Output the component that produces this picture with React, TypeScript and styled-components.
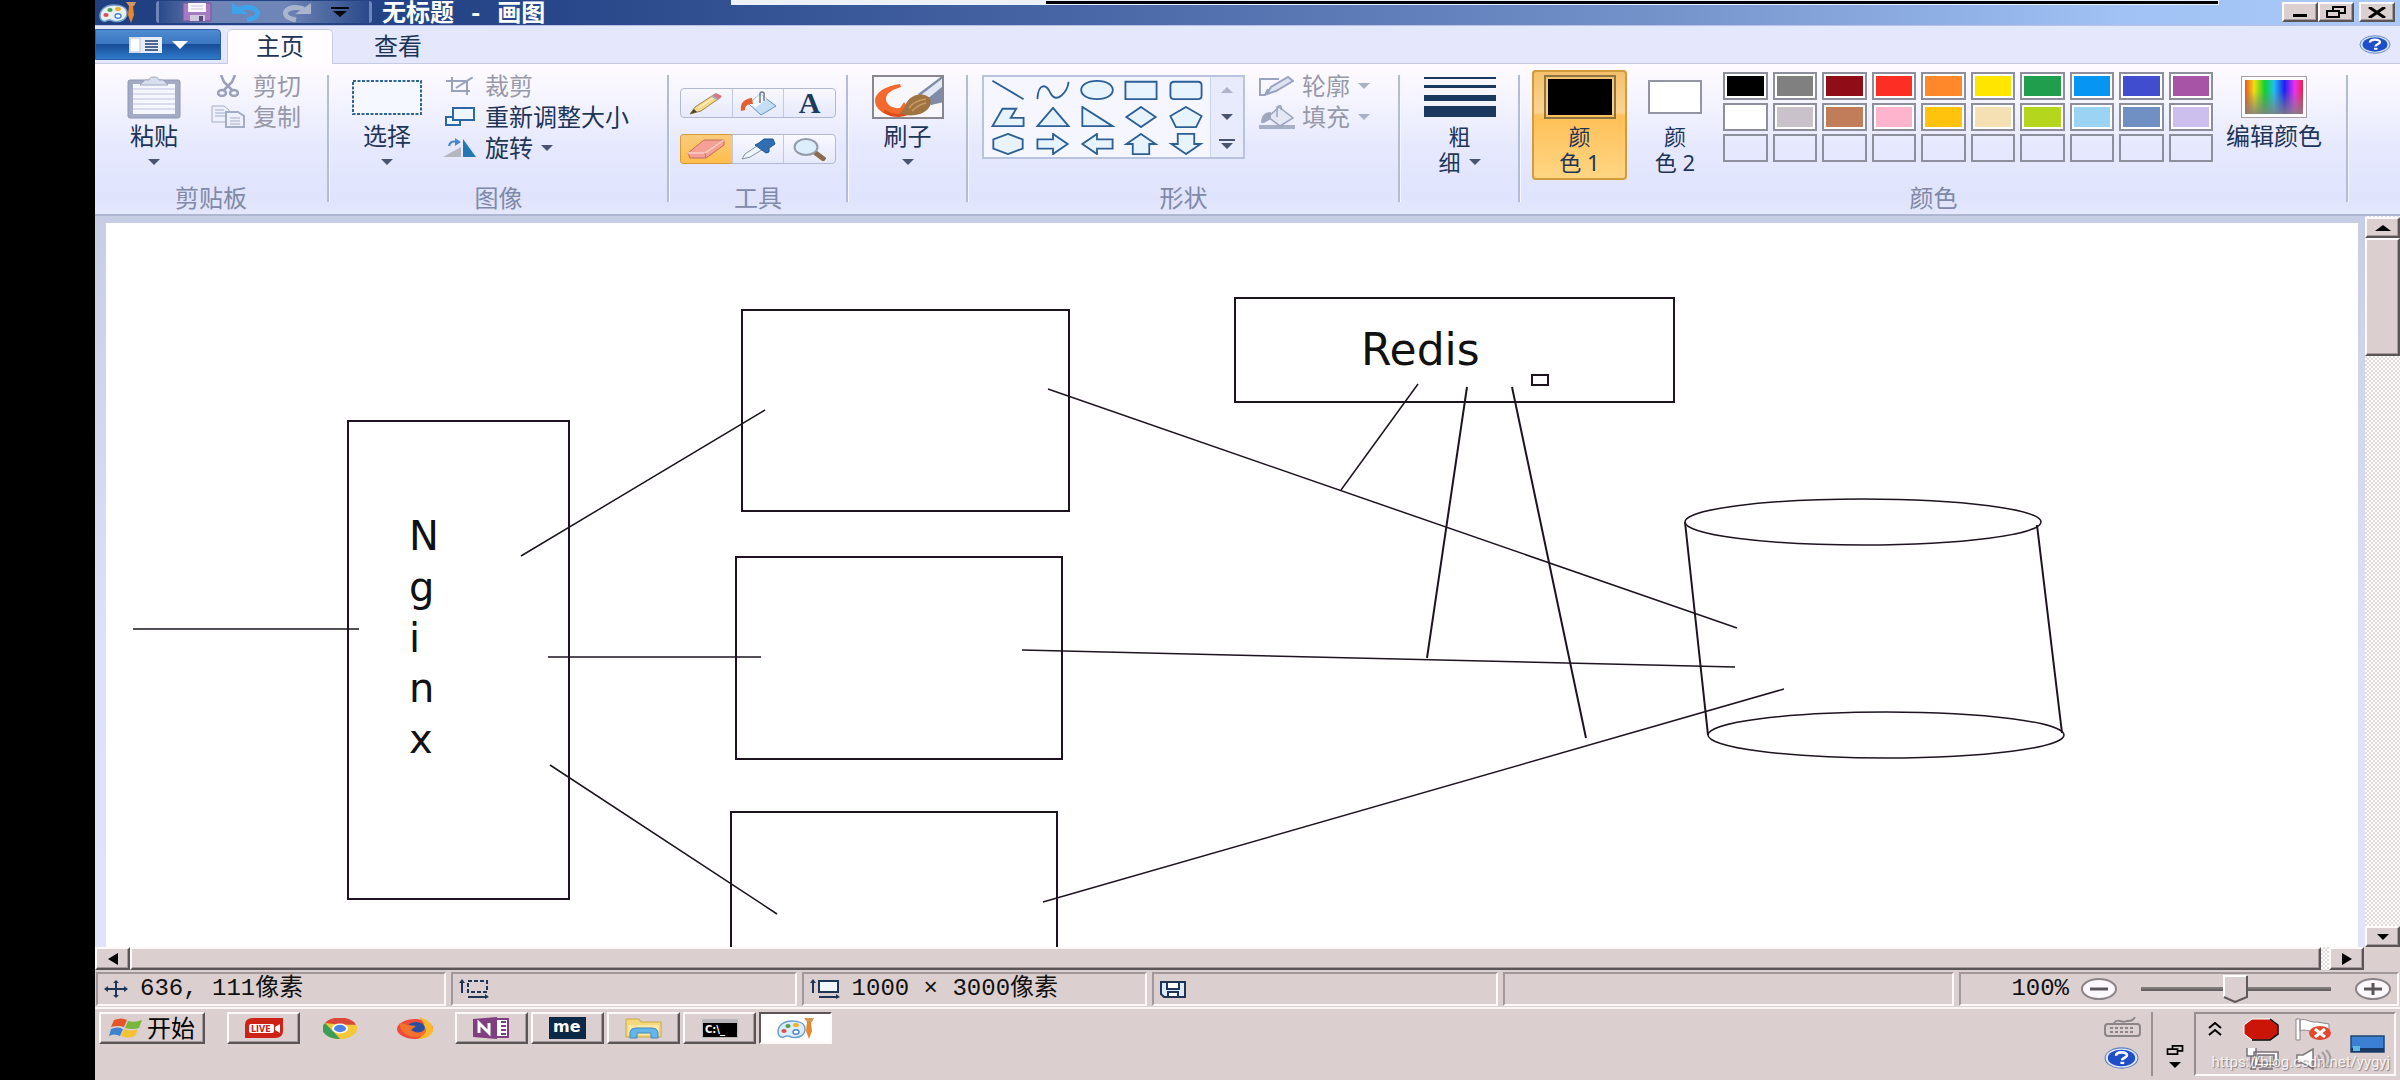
import React from "react";
import styled, { createGlobalStyle, css } from "styled-components";

const face = "#dccfcf";
const ink = "#1e3558";

const Global = createGlobalStyle`
  *, *::before, *::after { box-sizing: border-box; }
  html, body { margin: 0; background: #000; }
  body { font-family: "Noto Sans", "Noto Sans CJK SC", sans-serif; font-size: 24px; line-height: 24px; color: ${ink}; }
  button { border: 0; background: none; padding: 0; margin: 0; font: inherit; color: inherit; }
  svg { display: block; flex: none; }
`;

const raised = css`
  background: ${face};
  border: 2px solid;
  border-color: #fffafa #5c5557 #5c5557 #fffafa;
  box-shadow: inset -1px -1px 0 #a59b9c;
`;

const Screen = styled.main`
  height: 100vh;
  padding-left: 95px;
  background: #000;
  overflow: hidden;
`;
const Window = styled.div`
  height: 100%;
  display: flex;
  flex-direction: column;
  background: ${face};
`;

/* Title bar */
const TitleBar = styled.header`
  position: relative;
  flex: none;
  height: 26px;
  display: flex;
  align-items: center;
  padding: 0 5px 1px 4px;
  background: linear-gradient(90deg, #203f80 0%, #27478a 20%, #4765a4 42%, #7493cb 68%, #a0c2f4 88%, #a9caf9 100%);
  border-bottom: 1px solid #b9c2e4;
`;
const QuickBar = styled.div`
  display: flex;
  align-items: center;
  gap: 19px;
  margin-left: 20px;
  padding: 0 20px 0 23px;
  height: 22px;
  border: solid #6f86b8;
  border-width: 0 3px;
  border-radius: 3px;
  background: linear-gradient(90deg, #2b4a8a, #6f85b8 25%, #6f85b8 60%, #2b4a8a);
`;
const Title = styled.h1`
  flex: 1;
  margin: 0 0 0 10px;
  padding-top: 6px;
  font: bold 24px/24px "Liberation Mono", "Noto Sans CJK SC", monospace;
  color: #fff;
  white-space: pre;
`;
const ShareBar = styled.div`
  position: absolute;
  top: 0;
  left: 636px;
  right: 181px;
  height: 5px;
  padding: 1px 1px 1px 315px;
  background: #edf0fd;
`;
const ShareLine = styled.div`
  height: 3px;
  background: #000;
`;
const CaptionButton = styled.button<{ $gap?: boolean }>`
  ${raised}
  width: 36px;
  height: 20px;
  margin-left: ${(p) => (p.$gap ? 5 : 0)}px;
  display: grid;
  place-items: center;
`;

/* Tabs */
const TabStrip = styled.nav`
  flex: none;
  height: 38px;
  display: flex;
  align-items: flex-end;
  padding: 3px 9px 0 0;
  background: #e5e8fc;
  border-bottom: 1px solid #c5cbe2;
`;
const FileButton = styled.button`
  align-self: flex-start;
  width: 126px;
  height: 31px;
  display: flex;
  align-items: center;
  justify-content: center;
  gap: 10px;
  border: 1px solid #2d5ca6;
  border-radius: 0 4px 0 0;
  background: linear-gradient(#4f8bd0, #3a76c2 48%, #174c98 50%, #2f7bca);
`;
const Tab = styled.button<{ $active?: boolean }>`
  width: 106px;
  height: 35px;
  padding-bottom: 2px;
  margin-left: ${(p) => (p.$active ? 6 : 12)}px;
  margin-bottom: -1px;
  border-radius: 5px 5px 0 0;
  ${(p) => p.$active && "background: #fffdff; border: 1px solid #c5cbe2; border-bottom: 0;"}
`;
const HelpButton = styled.button`
  margin: 0 0 9px auto;
`;

/* Ribbon */
const Ribbon = styled.section`
  flex: none;
  display: flex;
  background: linear-gradient(#fffbff, #f4f4ff 25%, #e6e9fe 55%, #dfe3fc 90%, #e4e8fd);
  border-bottom: 2px solid #aeb6d0;
`;
const Group = styled.div<{ $w: number }>`
  flex: none;
  width: ${(p) => p.$w}px;
  display: flex;
  flex-direction: column;
`;
const GroupBody = styled.div<{ $pad?: number; $gap?: number; $center?: boolean }>`
  height: 122px;
  padding: 6px 0 6px ${(p) => p.$pad ?? 0}px;
  display: flex;
  align-items: flex-start;
  gap: ${(p) => p.$gap ?? 0}px;
  ${(p) => p.$center && "justify-content: center;"}
`;
const GroupLabel = styled.div`
  height: 28px;
  text-align: center;
  color: #8089a8;
`;
const Divider = styled.div`
  flex: none;
  width: 3px;
  margin: 11px 0 12px;
  background: #b4bbd4;
  border-right: 1px solid #f6f7ff;
`;
const Large = styled.button<{ $w: number; $on?: boolean }>`
  width: ${(p) => p.$w}px;
  height: 110px;
  padding-top: 5px;
  display: flex;
  flex-direction: column;
  align-items: center;
  border-radius: 4px;
  white-space: nowrap;
  ${(p) =>
    p.$on &&
    "background: linear-gradient(#f5bf6a, #fbd491 38%, #ffc057 42%, #ffd685); box-shadow: inset 0 0 0 2px #d19c3c;"}
`;
const IconBox = styled.span`
  height: 44px;
  margin-bottom: 4px;
  display: grid;
  place-items: center;
`;
const Line = styled.span<{ $stacked?: boolean }>`
  height: 26px;
  font-size: ${(p) => (p.$stacked ? 22 : 24)}px;
  line-height: 26px;
  display: flex;
  align-items: center;
  gap: 8px;
`;
const Rows = styled.div`
  display: flex;
  flex-direction: column;
`;
const Row = styled.button<{ $off?: boolean }>`
  height: 31px;
  display: flex;
  align-items: center;
  gap: 8px;
  white-space: nowrap;
  color: ${(p) => (p.$off ? "#9899a8" : ink)};
`;
const RowIcon = styled.span`
  width: 35px;
  display: grid;
  place-items: center;
`;

const ToolBars = styled.div`
  display: flex;
  flex-direction: column;
  gap: 16px;
  padding-top: 18px;
`;
const ToolBar = styled.div`
  width: 156px;
  height: 30px;
  display: flex;
  border: 1px solid #b3b9d3;
  border-radius: 4px;
  background: linear-gradient(#f8f8ff, #e6e9fb);
`;
const Tool = styled.button<{ $on?: boolean }>`
  flex: 1;
  display: grid;
  place-items: center;
  & + & { border-left: 1px solid #c2c8de; }
  ${(p) =>
    p.$on &&
    "background: linear-gradient(#f9cb7c, #ffbd4c); box-shadow: 0 0 0 1px #d59a34; border-radius: 3px;"}
`;

const Gallery = styled.div`
  width: 263px;
  height: 84px;
  margin-top: 5px;
  display: flex;
  border: 2px solid #b9c3e0;
  background: #f5f6ff;
`;
const ShapeGrid = styled.div`
  flex: 1;
  display: grid;
  grid-template-columns: repeat(5, 1fr);
  padding: 0 2px;
`;
const GalleryButton = styled.button`
  display: grid;
  place-items: center;
`;
const GalleryScroll = styled.div`
  width: 33px;
  display: grid;
  grid-template-rows: repeat(3, 1fr);
  background: #e8ebfc;
  border-left: 1px solid #cdd3ea;
`;

const CurrentColor = styled.span<{ $c: string; $big?: boolean }>`
  width: ${(p) => (p.$big ? 72 : 54)}px;
  height: ${(p) => (p.$big ? 44 : 34)}px;
  border: 2px solid ${(p) => (p.$big ? "#8d7443" : "#9395a5")};
  padding: 2px;
  background: ${(p) => p.$c};
`;
const ColorFill = styled.span<{ $c: string }>`
  display: block;
  height: 100%;
  background: ${(p) => p.$c};
`;
const Palette = styled.div`
  width: 490px;
  margin-top: 2px;
  display: grid;
  grid-template-columns: repeat(10, 1fr);
  grid-auto-rows: 28px;
  gap: 3px 5px;
`;
const Swatch = styled.button<{ $c?: string }>`
  border: 2px solid #8e8f9d;
  ${(p) => p.$c && `background: ${p.$c}; box-shadow: inset 0 0 0 2px #fff;`}
`;

/* Work area */
const WorkArea = styled.section`
  flex: 1;
  min-height: 0;
  display: flex;
  background: linear-gradient(#c8cde6, #dfe1f8 60%, #e2e3fb);
`;
const Canvas = styled.div`
  flex: 1;
  min-width: 0;
  margin: 7px 7px 0 11px;
  background: #fff;
  overflow: hidden;
`;
const hatch = css`
  background: repeating-conic-gradient(#fff 0 25%, #e3d9da 0 50%) 0 0 / 4px 4px;
`;
const VScroll = styled.div`
  flex: none;
  width: 35px;
  display: flex;
  flex-direction: column;
  padding-top: 1px;
  ${hatch}
`;
const VThumb = styled.div`
  ${raised}
  height: 118px;
  margin-bottom: auto;
`;
const VButton = styled.button`
  ${raised}
  height: 21px;
  display: grid;
  place-items: center;
`;
const HScroll = styled.div`
  flex: none;
  display: flex;
  height: 23px;
  margin-right: 36px;
  ${hatch}
`;
const HThumb = styled.div`
  ${raised}
  flex: 1;
  margin-right: 8px;
`;
const HButton = styled.button`
  ${raised}
  width: 35px;
  display: grid;
  place-items: center;
`;

/* Status bar */
const StatusBar = styled.footer`
  flex: none;
  height: 39px;
  display: grid;
  grid-template-columns: 350fr 345fr 345fr 346fr 450fr 440fr;
  gap: 5px;
  padding: 2px 1px;
  border-bottom: 2px solid #fbf5f5;
  font: 24px/24px "Liberation Mono", "Noto Sans CJK SC", monospace;
  color: #111;
`;
const Cell = styled.div<{ $end?: boolean }>`
  min-width: 0;
  display: flex;
  align-items: center;
  ${(p) => p.$end && "justify-content: flex-end;"}
  gap: 12px;
  padding: 0 6px;
  border: 2px solid;
  border-color: #a0989a #fff9f9 #fff9f9 #a0989a;
  white-space: pre;
`;
const thumbArt = encodeURIComponent(
  `<svg xmlns="http://www.w3.org/2000/svg" width="25" height="28"><path d="M1 1h23v21l-12 5-11-5z" fill="${face}"/><path d="M1 22V1h22" fill="none" stroke="#fff" stroke-width="2"/><path d="M24 1v21l-12 5-11-5" fill="none" stroke="#5f595b" stroke-width="2"/></svg>`
);
const Zoom = styled.input`
  appearance: none;
  width: 190px;
  height: 30px;
  margin: 0 12px;
  background: linear-gradient(#8a8384, #5f595b) center / 100% 4px no-repeat;
  &::-webkit-slider-thumb {
    appearance: none;
    width: 25px;
    height: 28px;
    background: url("data:image/svg+xml,${thumbArt}") center / 100% 100% no-repeat;
  }
`;

/* Task bar */
const TaskBar = styled.footer`
  position: relative;
  flex: none;
  height: 71px;
  display: flex;
  align-items: flex-start;
  padding: 3px 4px 0;
  color: #000;
`;
const Start = styled.button`
  ${raised}
  width: 106px;
  height: 32px;
  margin-right: 22px;
  display: flex;
  align-items: center;
  justify-content: center;
  gap: 4px;
`;
const Tasks = styled.div`
  display: flex;
  gap: 3px;
  margin-right: auto;
`;
const Task = styled.button<{ $kind?: "flat" | "down" }>`
  ${raised}
  width: 73px;
  height: 32px;
  display: grid;
  place-items: center;
  ${(p) => p.$kind === "flat" && "border-color: transparent; box-shadow: none;"}
  ${(p) =>
    p.$kind === "down" &&
    "background: #fff; border-color: #5c5557 #fffafa #fffafa #5c5557; box-shadow: none;"}
`;
const Language = styled.div`
  height: 64px;
  display: flex;
  flex-direction: column;
  gap: 10px;
  padding: 5px 10px 0 0;
  border-right: 2px solid #9b9294;
`;
const Restore = styled.button`
  height: 64px;
  padding: 33px 9px 0 12px;
  display: flex;
  flex-direction: column;
  align-items: center;
  gap: 7px;
`;
const Tray = styled.div`
  width: 202px;
  height: 64px;
  display: grid;
  grid-template-columns: 38px 53px 53px 54px;
  grid-template-rows: 30px 30px;
  place-items: center;
  border: 2px solid;
  border-color: #968e90 #fffafa #fffafa #968e90;
`;
const TrayButton = styled.button<{ $tall?: boolean; $col?: number }>`
  ${(p) => p.$tall && "grid-row: 1 / 3; grid-column: 4;"}
  ${(p) => p.$col && `grid-column: ${p.$col};`}
`;
const Watermark = styled.span`
  position: absolute;
  right: 10px;
  bottom: 8px;
  font: 15px/20px Roboto, sans-serif;
  color: rgba(255, 255, 255, 0.85);
  text-shadow: 1px 1px 1px rgba(90, 80, 85, 0.6);
`;

/* Icons */
const Down = ({ c = "#4a5472", w = 12, h = 6 }: { c?: string; w?: number; h?: number }) => (
  <svg width={w} height={h} viewBox="0 0 12 6"><path d="M0 0h12L6 6z" fill={c} /></svg>
);
const Up = ({ c = "#b0b3c8", w = 12, h = 6 }: { c?: string; w?: number; h?: number }) => (
  <svg width={w} height={h} viewBox="0 0 12 6" preserveAspectRatio="none"><path d="M0 6h12L6 0z" fill={c} /></svg>
);
const PaintIcon = ({ light }: { light?: boolean }) => (
  <svg width="37" height="22" viewBox="0 0 37 22">
    <path d="M15 4C6 4 1 9 1 15c0 4 3 6 6 5 3-2 5-1 7 0 8 2 14-2 14-8 0-5-5-8-13-8z" fill={light ? "#dcecf8" : "#e8f0f6"} stroke="#6f9fca" strokeWidth="1.5" />
    <ellipse cx="7" cy="14" rx="2.6" ry="2" fill="#d95050" /><ellipse cx="11" cy="9" rx="2.6" ry="2" fill="#4aa050" />
    <ellipse cx="19" cy="8" rx="3" ry="2" fill="#f0b030" /><ellipse cx="19" cy="15" rx="3" ry="2.2" fill="#fff" stroke="#4b85c5" strokeWidth="1.4" />
    <path d="M27 1h10l-2 4h-5z" fill="#d5965c" /><path d="M30 5h4l1 9-3 8-3-8z" fill="#e8862c" />
  </svg>
);
const SaveIcon = () => (
  <svg width="30" height="20" viewBox="0 0 30 20">
    <path d="M1 1h28v18H1z" fill="#a779c0" stroke="#7a529b" /><path d="M6 1h18v9H6z" fill="#f8f6ff" />
    <path d="M9 4h12M9 7h12" stroke="#c9c3dc" /><path d="M8 13h15v6H8z" fill="#cfc9dd" /><path d="M17 14h4v5h-4z" fill="#594878" />
  </svg>
);
const UndoIcon = ({ redo }: { redo?: boolean }) => (
  <svg width="31" height="20" viewBox="0 0 31 20">
    <g transform={redo ? "translate(31 0) scale(-1 1)" : undefined}>
      <path d="M8 7c12-4 21 1 18 6-1 3-5 4-10 5" fill="none" stroke={redo ? "#aab4cd" : "#3fa3ec"} strokeWidth="5" />
      <path d="M1 1v11h16z" fill={redo ? "#aab4cd" : "#3fa3ec"} />
    </g>
  </svg>
);
const FileIcon = () => (
  <svg width="33" height="16" viewBox="0 0 33 16">
    <path d="M0 0h33v16H0z" fill="#e7edf8" /><path d="M1 1h10v14H1z" fill="#fff" stroke="#b9c3da" />
    <path d="M16 4h13M16 7h13M16 10h13M16 13h13" stroke="#1d3a72" strokeWidth="1.6" />
  </svg>
);
const Help = ({ w = 32, h = 19 }: { w?: number; h?: number }) => (
  <svg width={w} height={h} viewBox="0 0 32 20" preserveAspectRatio="none">
    <ellipse cx="16" cy="10" rx="15" ry="9.2" fill="#dfe8fb" stroke="#5f83c4" /><ellipse cx="16" cy="10" rx="12.5" ry="7.6" fill="#1e4fc8" />
    <path d="M11 8c0-4 10-4 10-.6C21 10 16.500 9.500 16.500 12" fill="none" stroke="#fff" strokeWidth="2.400" /><path d="M15 13.500h3.500v2H15z" fill="#fff" />
  </svg>
);
const PasteIcon = () => (
  <svg width="56" height="43" viewBox="0 0 56 43">
    <rect x="2" y="4" width="52" height="38" rx="2" fill="#a3abc5" stroke="#8f98b5" />
    <path d="M7 8h42v30H7z" fill="#f5f7ff" /><path d="M7 13h42M7 18h42M7 23h42M7 28h42M7 33h42" stroke="#cfd5ea" strokeWidth="1.500" />
    <path d="M14 9l5-5h4c0-4 10-4 10 0h4l5 5z" fill="#d9deee" stroke="#a0a8c2" />
  </svg>
);
const CutIcon = () => (
  <svg width="22" height="22" viewBox="0 0 22 22" fill="none" stroke="#98a1b9" strokeWidth="2.500">
    <path d="M4 0l3 7 9 9M18 0l-3 7-9 9" /><ellipse cx="5" cy="18" rx="4" ry="3" /><ellipse cx="17" cy="18" rx="4" ry="3" />
  </svg>
);
const CopyIcon = () => (
  <svg width="34" height="23" viewBox="0 0 34 23" stroke="#a4adc6" fill="#eef1fd">
    <path d="M1 1h12l5 4v12H1z" /><path d="M4 5h9M4 8h10M4 11h10" /><path d="M15 7h12l6 4v11H15z" strokeWidth="2" /><path d="M19 13h10M19 16h10M19 19h10" />
  </svg>
);
const SelectIcon = () => (
  <svg width="70" height="35" viewBox="0 0 70 35"><path d="M1 1h68v33H1z" fill="#f5f8ff" stroke="#2d6595" strokeWidth="2" strokeDasharray="3 1.500" /></svg>
);
const CropIcon = () => (
  <svg width="27" height="18" viewBox="0 0 27 18" fill="none" stroke="#9aa2ba" strokeWidth="2"><path d="M0 4h21v14M6 0v14h18M10 11L27 0" /></svg>
);
const ResizeIcon = () => (
  <svg width="30" height="19" viewBox="0 0 30 19" fill="#eef6ff" stroke="#2a67a4" strokeWidth="2"><path d="M1 10h14v8H1z" /><path d="M8 1h21v12H8z" /></svg>
);
const RotateIcon = () => (
  <svg width="34" height="19" viewBox="0 0 34 19">
    <path d="M0 19h18V9z" fill="#b4b7c0" /><path d="M20 1v18h13z" fill="#2477b5" /><path d="M6 8c1-5 5-5 9-4" fill="none" stroke="#4a86cc" strokeWidth="2" /><path d="M12 0l6 4-6 4z" fill="#4a86cc" />
  </svg>
);
const Pencil = () => (
  <svg width="34" height="23" viewBox="0 0 34 23"><path d="M1 22l5-7L26 2l6 3-20 14z" fill="#f5d98a" stroke="#a08550" /><path d="M9 16L27 4" stroke="#fff3c0" strokeWidth="1.500" /><path d="M1 22l4-5 3 3z" fill="#4e4230" /><path d="M27 1l6 3-4 4-6-3z" fill="#d77782" /><path d="M23 4l6 4" stroke="#a9aebb" strokeWidth="2" /></svg>
);
const Bucket = () => (
  <svg width="37" height="25" viewBox="0 0 37 25"><path d="M20 3l16 12-15 9L9 13z" fill="#c5def6" stroke="#6690bd" /><path d="M20 3l7 5-12 9-6-4z" fill="#f4faff" /><path d="M12 7C3 8 0 13 1 20l4-1c0-4 2-6 8-6z" fill="#e2602f" /><path d="M20 12V2c2-2 5-1 4 3v5" fill="none" stroke="#72798c" strokeWidth="1.500" /></svg>
);
const TextGlyph = styled.span`
  font: bold 30px/26px "Liberation Serif", serif;
  color: #1d3a5f;
`;
const Eraser = () => (
  <svg width="38" height="20" viewBox="0 0 38 20"><path d="M1 14L17 1h20v5L19 19H3z" fill="#f4a095" stroke="#c36c62" /><path d="M1 14h17L37 1" fill="none" stroke="#fbd0c8" strokeWidth="1.500" /><path d="M18 14l1 5" stroke="#c36c62" /></svg>
);
const Dropper = () => (
  <svg width="35" height="22" viewBox="0 0 35 22"><path d="M1 21l3-5L19 6l5 4L9 19z" fill="#eef5fb" stroke="#8795a8" /><path d="M14 7l4-2 5-4h9l2 5-6 4v4l-3 1z" fill="#2f6fb5" stroke="#1f528f" /></svg>
);
const Magnifier = () => (
  <svg width="33" height="23" viewBox="0 0 33 23"><path d="M20 13l12 9" stroke="#8b6a4b" strokeWidth="5" /><ellipse cx="13" cy="9" rx="11.500" ry="8" fill="#dceefb" stroke="#949aa8" strokeWidth="2" /></svg>
);
const BrushIcon = () => (
  <svg width="72" height="44" viewBox="0 0 72 44">
    <path d="M1 1h70v42H1z" fill="#f8f8fc" />
    <path d="M72 1v26L59 30 46 19 70 1z" fill="#7f8ba8" /><path d="M49 20L71 3v8L54 25z" fill="#e3e9f4" />
    <path d="M28 9C12 11 3 18 3 26c0 7 8 14 18 15 8 1 14-1 17-5l-6-9-4 6c-8 1-14-4-14-9 0-6 6-9 15-12z" fill="#f26a2e" />
    <path d="M12 36c7 5 17 6 25 2" fill="none" stroke="#e04a18" strokeWidth="3" />
    <path d="M27 38c4-1 5-6 8-11 5-8 16-10 23-4 3 7-2 13-10 16-7 2-15 2-21-1z" fill="#a07442" /><path d="M37 33c4-6 10-8 17-9M40 36c5-5 9-7 14-8" stroke="#c79a62" strokeWidth="1.500" fill="none" />
    <path d="M1 1h70v42H1z" fill="none" stroke="#8b8791" strokeWidth="2" />
  </svg>
);
const OutlineIcon = () => (
  <svg width="35" height="20" viewBox="0 0 35 20" fill="#dfe4f4" stroke="#9aa4c0" strokeWidth="2"><path d="M20 3H1v16h5l3-6" fill="none" /><path d="M8 18l4-7L29 1l5 4-17 10z" /></svg>
);
const FillIcon = () => (
  <svg width="36" height="24" viewBox="0 0 36 24"><path d="M0 20h36v4H0z" fill="#a7afc6" /><path d="M20 2l14 11-13 8-12-9z" fill="#e4e8f5" stroke="#9aa4c0" strokeWidth="1.500" /><path d="M12 7C5 7 2 11 2 18h3l7-4z" fill="#a0a8c0" /><path d="M18 12V2c4-3 5 0 4 3" fill="none" stroke="#9aa4c0" strokeWidth="1.500" /></svg>
);
const WidthIcon = () => (
  <svg width="72" height="40" viewBox="0 0 72 40" fill="#1b385e"><path d="M0 0h72v2H0zM0 8h72v3H0zM0 18h72v6H0zM0 29h72v11H0z" /></svg>
);
const Spectrum = styled.span`
  width: 64px;
  height: 40px;
  border: 3px solid #fff;
  outline: 1px solid #a79ea8;
  background: linear-gradient(transparent 30%, #808080 110%),
    linear-gradient(90deg, #ee5020, #f0e010 16%, #10d030 34%, #20c0f0 50%, #2020f0 68%, #f030f0 86%, #f02040);
`;
const shapes: [string, string][] = [
  ["直线", "M1 1L35 21"],
  ["曲线", "M1 21C2 2 11 5 15 14C22 28 34 12 35 2"],
  ["椭圆形", "M18 1C41 1 41 21 18 21S-5 1 18 1z"],
  ["矩形", "M1 2h34v19H1z"],
  ["圆角矩形", "M5 2h26q4 0 4 4v11q0 4-4 4H5q-4 0-4-4V6q0-4 4-4z"],
  ["多边形", "M1 21L12 2h15l-6 10h14v9z"],
  ["三角形", "M18 1L35 21H1z"],
  ["直角三角形", "M2 0v21h33z"],
  ["菱形", "M18 0l16 11-16 11L2 11z"],
  ["五边形", "M18 0l17 10-6 12H7L1 10z"],
  ["六边形", "M18 0l16 6v10l-16 6L2 16V6z"],
  ["右箭头", "M1 6h17V0l16 11-16 11v-6H1z"],
  ["左箭头", "M35 6H18V0L2 11l16 11v-6h17z"],
  ["上箭头", "M18 0l16 11h-7v11H9V11H2z"],
  ["下箭头", "M18 22L2 11h7V0h18v11h7z"],
];
const palette = [
  "#000000", "#808080", "#8f0d17", "#fb2f23", "#ff882a", "#ffe600", "#209e4d", "#0695f0", "#404dcf", "#a753a6",
  "#ffffff", "#c9c2ca", "#c17d59", "#ffb4cd", "#ffc30e", "#f5e0b4", "#b4d61d", "#9bd3f2", "#7090c3", "#cdbfed",
];

/* The user's drawing, in the coordinates of the paint sheet */
const Drawing = () => (
  <svg width="2252" height="724" viewBox="106 223 2252 724" fill="none" stroke="#1d141f" strokeWidth="1.500">
    <g strokeWidth="2">
      <path d="M348 421h221v478H348zM742 310h327v201H742zM736 557h326v202H736zM731 812h326v160H731zM1235 298h439v104h-439z" />
      <path d="M1532 375h16v10h-16z" />
    </g>
    <path d="M133 629h226M521 556L765 410M548 657h213M550 765L777 914" />
    <path d="M1048 389L1737 628M1022 650L1735 667M1043 902L1784 689" />
    <path d="M1418 384L1341 490" />
    <g strokeWidth="2">
      <path d="M1467 387L1427 658M1512 387L1586 738M1685 522L1708 735M2037 525L2062 733" />
    </g>
    <ellipse cx="1863" cy="522" rx="178" ry="23" />
    <ellipse cx="1886" cy="735" rx="178" ry="23" />
    <g fill="#111" stroke="none" fontSize="40" fontFamily="'DejaVu Sans', sans-serif">
      <text x="1361" y="365" fontSize="44">Redis</text>
      <text x="409" y="550">N</text>
      <text x="409" y="601">g</text>
      <text x="409" y="652">i</text>
      <text x="409" y="702">n</text>
      <text x="409" y="753">x</text>
    </g>
  </svg>
);

const MoveIcon = () => (
  <svg width="24" height="18" viewBox="0 0 24 18" stroke={ink} fill={ink} strokeWidth="2"><path d="M2 9h20M12 2v14" /><path d="M0 9l4-3v6zM24 9l-4-3v6zM12 0l3 3H9zM12 18l3-3H9z" stroke="none" /></svg>
);
const SizeIcon = ({ dashed }: { dashed?: boolean }) => (
  <svg width="30" height="20" viewBox="0 0 30 20" stroke={ink} fill="none" strokeWidth="2">
    <path d="M3 2v12M9 18h18" /><path d="M0 4l3-4 3 4zM30 18l-4-3v5z" fill={ink} stroke="none" />
    <path d="M9 2h19v11H9z" fill={dashed ? "none" : "#f2f7ff"} strokeDasharray={dashed ? "4 2" : undefined} />
  </svg>
);
const DiskIcon = () => (
  <svg width="26" height="17" viewBox="0 0 26 17" fill="#dfeaf8" stroke={ink} strokeWidth="2"><path d="M1 1h24v15H4l-3-3z" /><path d="M7 1h12v7H7zM8 11h10v5H8z" fill="#fff" /></svg>
);
const ZoomIcon = ({ plus }: { plus?: boolean }) => (
  <svg width="36" height="22" viewBox="0 0 36 22"><ellipse cx="18" cy="11" rx="17" ry="10" fill="#fbf7fb" stroke="#8a8488" strokeWidth="2" /><path d={plus ? "M9 11h18M18 5v12" : "M9 11h18"} stroke="#5b5659" strokeWidth="3" /></svg>
);

const WinLogo = () => (
  <svg width="34" height="20" viewBox="0 0 34 20">
    <path d="M5 2q7-3 13 0l-3 7Q9 7 2 9z" fill="#e2562a" /><path d="M19 3q7 2 14-1l-3 8q-7 2-14 0z" fill="#79b63c" />
    <path d="M2 11q7-3 12 0l-3 7q-6-3-11 0z" fill="#3f83cf" /><path d="M15 11q7 3 14 0l-3 7q-7 3-14 0z" fill="#f4c231" />
  </svg>
);
const tag = { fontFamily: "'DejaVu Sans', sans-serif", fontWeight: 700 };
const LiveIcon = () => (
  <svg width="38" height="20" viewBox="0 0 38 20"><path d="M8 0h30v13q0 7-8 7H0V7q0-7 8-7z" fill="#cc2316" /><rect x="4" y="6" width="25" height="9" rx="2" fill="#fff" /><path d="M30 9l5-3v9l-5-3z" fill="#fff" /><text x="6" y="14" fontSize="8" fill="#cc2316" {...tag}>LIVE</text></svg>
);
const ChromeIcon = () => (
  <svg width="34" height="21" viewBox="0 0 34 34" preserveAspectRatio="none"><circle cx="17" cy="17" r="17" fill="#f6c837" /><path d="M2 8a17 17 0 0 1 31 3H17z" fill="#d9493a" /><path d="M2 8l9 15 6 11A17 17 0 0 1 2 8z" fill="#3b9d58" /><circle cx="17" cy="17" r="8" fill="#fff" /><circle cx="17" cy="17" r="6" fill="#4b82e8" /></svg>
);
const FirefoxIcon = () => (
  <svg width="37" height="22" viewBox="0 0 37 22"><ellipse cx="18" cy="12" rx="18" ry="10" fill="#ef4a3a" /><path d="M22 0c10 3 15 8 14 14-2 6-9 8-15 8 8-5 9-14 1-22z" fill="#fbb92d" /><ellipse cx="19" cy="11" rx="9" ry="6" fill="#2b4fa0" /><path d="M3 6l8 2 8 1-5 4c5 4 12 3 15-2 1 7-5 9-11 9C8 19 2 13 3 6z" fill="#f5712c" /></svg>
);
const OneNoteIcon = () => (
  <svg width="37" height="22" viewBox="0 0 37 22"><path d="M22 2h13v18H22z" fill="#fff" stroke="#7e3f7e" strokeWidth="2" /><path d="M28 5h5M28 9h5M28 13h5M28 17h5" stroke="#7e3f7e" strokeWidth="2" /><path d="M0 2l24-2v22L0 20z" fill="#80407f" /><path d="M6 16V6l10 10V6" fill="none" stroke="#fff" strokeWidth="3" /></svg>
);
const MeIcon = () => (
  <svg width="37" height="22" viewBox="0 0 37 22"><path d="M0 0h37v22H0z" fill="#0d2747" /><text x="4" y="15" fontSize="16" fill="#fff" {...tag}>me</text></svg>
);
const FolderIcon = () => (
  <svg width="37" height="22" viewBox="0 0 37 22"><path d="M1 2h13l2 3h20v15H1z" fill="#f3d97c" stroke="#cda84a" /><path d="M3 8h31v10H3z" fill="#f9e8a5" /><path d="M5 21v-6q1-4 6-4h16q5 0 6 4v6h-7v-5H12v5z" fill="#64b5ea" stroke="#3f8bc2" /></svg>
);
const CmdIcon = () => (
  <svg width="36" height="19" viewBox="0 0 36 19"><path d="M0 0h36v19H0z" fill="#b9b6ba" /><path d="M1 4h34v14H1z" fill="#000" /><text x="3" y="14" fontSize="10" fill="#fff" {...tag}>C:\_</text></svg>
);
const KeyboardIcon = () => (
  <svg width="37" height="20" viewBox="0 0 37 20" fill="none" stroke="#8b8587" strokeWidth="2"><rect x="1" y="7" width="35" height="12" rx="3" /><path d="M6 11h25M6 15h25" strokeDasharray="3 2" /><path d="M10 6c4-6 8 1 13-2 5 0 6-1 8-4" /></svg>
);
const WindowsIcon = ({ w = 20, h = 12 }: { w?: number; h?: number }) => (
  <svg width={w} height={h} viewBox="0 0 20 12" fill={face} stroke="#000" strokeWidth="2"><path d="M7 1h12v6H7z" /><path d="M1 5h12v6H1z" /></svg>
);

const Big = ({ icon, w, on, lines, arrow }: { icon: React.ReactNode; w: number; on?: boolean; lines: string[]; arrow?: "below" | "inline" }) => (
  <Large $w={w} $on={on}>
    <IconBox>{icon}</IconBox>
    {lines.map((l, i) => (
      <Line key={l} $stacked={lines.length > 1}>{l}{arrow === "inline" && i === lines.length - 1 && <Down />}</Line>
    ))}
    {arrow === "below" && <Line><Down /></Line>}
  </Large>
);
const Small = ({ icon, off, text, arrow }: { icon: React.ReactNode; off?: boolean; text: string; arrow?: boolean }) => (
  <Row $off={off}><RowIcon>{icon}</RowIcon>{text}{arrow && <Down c={off ? "#aab0c6" : undefined} />}</Row>
);

export default function App() {
  return (
    <Screen>
      <Global />
      <Window>
        <TitleBar>
          <PaintIcon />
          <QuickBar>
            <button aria-label="保存"><SaveIcon /></button>
            <button aria-label="撤消"><UndoIcon /></button>
            <button aria-label="重做"><UndoIcon redo /></button>
            <button aria-label="自定义快速访问工具栏">
              <svg width="18" height="10" viewBox="0 0 18 10"><path d="M0 0h18v2H0zM2 4h14L9 10z" fill="#05070c" /></svg>
            </button>
          </QuickBar>
          <Title>无标题 - 画图</Title>
          <CaptionButton aria-label="最小化"><svg width="14" height="10"><path d="M0 7h14v3H0z" /></svg></CaptionButton>
          <CaptionButton aria-label="还原"><WindowsIcon /></CaptionButton>
          <CaptionButton $gap aria-label="关闭"><svg width="18" height="11"><path d="M1 0l16 11M17 0L1 11" stroke="#000" strokeWidth="3" /></svg></CaptionButton>
          <ShareBar><ShareLine /></ShareBar>
        </TitleBar>

        <TabStrip>
          <FileButton aria-label="画图菜单"><FileIcon /><Down c="#fff" w={16} h={8} /></FileButton>
          <Tab $active>主页</Tab>
          <Tab>查看</Tab>
          <HelpButton aria-label="帮助"><Help /></HelpButton>
        </TabStrip>

        <Ribbon>
          <Group $w={232}>
            <GroupBody $pad={23} $gap={20}>
              <Big w={72} icon={<PasteIcon />} lines={["粘贴"]} arrow="below" />
              <Rows>
                <Small off icon={<CutIcon />} text="剪切" />
                <Small off icon={<CopyIcon />} text="复制" />
              </Rows>
            </GroupBody>
            <GroupLabel>剪贴板</GroupLabel>
          </Group>
          <Divider />
          <Group $w={337}>
            <GroupBody $pad={17} $gap={15}>
              <Big w={80} icon={<SelectIcon />} lines={["选择"]} arrow="below" />
              <Rows>
                <Small off icon={<CropIcon />} text="裁剪" />
                <Small icon={<ResizeIcon />} text="重新调整大小" />
                <Small icon={<RotateIcon />} text="旋转" arrow />
              </Rows>
            </GroupBody>
            <GroupLabel>图像</GroupLabel>
          </Group>
          <Divider />
          <Group $w={176}>
            <GroupBody $pad={10}>
              <ToolBars>
                <ToolBar>
                  <Tool aria-label="铅笔"><Pencil /></Tool>
                  <Tool aria-label="用颜色填充"><Bucket /></Tool>
                  <Tool><TextGlyph>A</TextGlyph></Tool>
                </ToolBar>
                <ToolBar>
                  <Tool $on aria-label="橡皮擦"><Eraser /></Tool>
                  <Tool aria-label="颜色选取器"><Dropper /></Tool>
                  <Tool aria-label="放大镜"><Magnifier /></Tool>
                </ToolBar>
              </ToolBars>
            </GroupBody>
            <GroupLabel>工具</GroupLabel>
          </Group>
          <Divider />
          <Group $w={117}>
            <GroupBody $center><Big w={86} icon={<BrushIcon />} lines={["刷子"]} arrow="below" /></GroupBody>
          </Group>
          <Divider />
          <Group $w={429}>
            <GroupBody $pad={13} $gap={14}>
              <Gallery>
                <ShapeGrid>
                  {shapes.map(([name, d], i) => (
                    <GalleryButton key={name} aria-label={name}>
                      <svg width="36" height="22" viewBox="-1 -1 38 24"><path d={d} fill={i < 2 ? "none" : "#e8f4fd"} stroke="#2c5f96" strokeWidth="2" /></svg>
                    </GalleryButton>
                  ))}
                </ShapeGrid>
                <GalleryScroll>
                  <GalleryButton aria-label="上一行"><Up /></GalleryButton>
                  <GalleryButton aria-label="下一行"><Down /></GalleryButton>
                  <GalleryButton aria-label="更多形状"><svg width="16" height="10" viewBox="0 0 16 10"><path d="M0 0h16v2H0zM2 4h12L8 10z" fill="#4a5472" /></svg></GalleryButton>
                </GalleryScroll>
              </Gallery>
              <Rows>
                <Small off icon={<OutlineIcon />} text="轮廓" arrow />
                <Small off icon={<FillIcon />} text="填充" arrow />
              </Rows>
            </GroupBody>
            <GroupLabel>形状</GroupLabel>
          </Group>
          <Divider />
          <Group $w={117}>
            <GroupBody $center><Big w={86} icon={<WidthIcon />} lines={["粗", "细"]} arrow="inline" /></GroupBody>
          </Group>
          <Divider />
          <Group $w={825}>
            <GroupBody $pad={11}>
              <Big w={95} on icon={<CurrentColor $big $c="transparent"><ColorFill $c="#000" /></CurrentColor>} lines={["颜", "色 1"]} />
              <Big w={96} icon={<CurrentColor $c="#fff" />} lines={["颜", "色 2"]} />
              <Palette>
                {palette.map((c) => <Swatch key={c} $c={c} aria-label={c} />)}
                {Array.from({ length: 10 }, (_, i) => <Swatch key={i} aria-label={`自定义颜色 ${i + 1}`} />)}
              </Palette>
              <Big w={122} icon={<Spectrum />} lines={["编辑颜色"]} />
            </GroupBody>
            <GroupLabel>颜色</GroupLabel>
          </Group>
          <Divider />
        </Ribbon>

        <WorkArea>
          <Canvas><Drawing /></Canvas>
          <VScroll>
            <VButton aria-label="向上滚动"><Up c="#000" w={16} h={6} /></VButton>
            <VThumb />
            <VButton aria-label="向下滚动"><Down c="#000" w={16} h={6} /></VButton>
          </VScroll>
        </WorkArea>
        <HScroll>
          <HButton aria-label="向左滚动"><svg width="10" height="12"><path d="M10 0v12L0 6z" /></svg></HButton>
          <HThumb />
          <HButton aria-label="向右滚动"><svg width="10" height="12"><path d="M0 0v12l10-6z" /></svg></HButton>
        </HScroll>

        <StatusBar>
          <Cell><MoveIcon />636, 111像素</Cell>
          <Cell><SizeIcon dashed /></Cell>
          <Cell><SizeIcon />1000 × 3000像素</Cell>
          <Cell><DiskIcon /></Cell>
          <Cell />
          <Cell $end>
            <label htmlFor="zoom">100%</label>
            <button aria-label="缩小"><ZoomIcon /></button>
            <Zoom id="zoom" type="range" min={0} max={100} defaultValue={50} />
            <button aria-label="放大"><ZoomIcon plus /></button>
          </Cell>
        </StatusBar>

        <TaskBar>
          <Start><WinLogo />开始</Start>
          <Tasks>
            <Task aria-label="直播"><LiveIcon /></Task>
            <Task $kind="flat" aria-label="Chrome"><ChromeIcon /></Task>
            <Task $kind="flat" aria-label="Firefox"><FirefoxIcon /></Task>
            <Task aria-label="OneNote"><OneNoteIcon /></Task>
            <Task aria-label="me"><MeIcon /></Task>
            <Task aria-label="资源管理器"><FolderIcon /></Task>
            <Task aria-label="命令提示符"><CmdIcon /></Task>
            <Task $kind="down" aria-label="画图"><PaintIcon light /></Task>
          </Tasks>
          <Language>
            <button aria-label="键盘"><KeyboardIcon /></button>
            <button aria-label="语言帮助"><Help w={35} h={22} /></button>
          </Language>
          <Restore aria-label="语言栏选项"><WindowsIcon w={20} h={10} /><Down c="#000" w={12} h={6} /></Restore>
          <Tray>
            <TrayButton aria-label="隐藏图标"><svg width="14" height="14" fill="none" stroke="#000" strokeWidth="2"><path d="M1 6l6-5 6 5M1 13l6-5 6 5" /></svg></TrayButton>
            <TrayButton aria-label="录制"><svg width="36" height="23" viewBox="0 0 36 23"><path d="M9 1h18l8 6v9l-8 6H9l-8-6V7z" fill="#cc1509" stroke="#fff" strokeWidth="1" /><path d="M27 1l8 6v9l-8 6H9" fill="none" stroke="#000" strokeWidth="1.500" /></svg></TrayButton>
            <TrayButton aria-label="操作中心">
              <svg width="37" height="23" viewBox="0 0 37 23"><path d="M1 1h4v21H1zM5 2c7-2 9 3 17 2l12 2v7H17c-6 0-8-2-12 0z" fill="#fff" stroke="#8b8587" /><ellipse cx="25" cy="15" rx="11" ry="7" fill="#e2482e" /><path d="M20 11l10 8M30 11l-10 8" stroke="#fff" strokeWidth="3" /></svg>
            </TrayButton>
            <TrayButton $tall aria-label="显示桌面"><svg width="35" height="18" viewBox="0 0 35 18"><path d="M1 1h33v16H1z" fill="#3b80d5" stroke="#25456f" strokeWidth="1.500" /><path d="M1 13h33v4H1z" fill="#173a68" /><path d="M3 11h7v5H3z" fill="#5fb7e6" /></svg></TrayButton>
            <TrayButton $col={2} aria-label="网络">
              <svg width="36" height="22" viewBox="0 0 36 22" fill="#fff" stroke="#77717a" strokeWidth="1.500"><path d="M11 4h24v14H11zM16 21h14M4 0v8h9V0M8 8v13h5" /><path d="M15 7h16v8H15z" fill="#c8c2c6" /></svg>
            </TrayButton>
            <TrayButton $col={3} aria-label="音量">
              <svg width="36" height="22" viewBox="0 0 36 22" fill="#fff" stroke="#7d7779" strokeWidth="1.500"><path d="M1 7h6l10-6v20L7 15H1z" /><path d="M22 7q4 4 0 8M26 4q7 7 0 14M30 2q9 9 0 18" fill="none" stroke="#a39c9e" strokeWidth="2" /></svg>
            </TrayButton>
          </Tray>
          <Watermark>https://blog.csdn.net/yygyj</Watermark>
        </TaskBar>
      </Window>
    </Screen>
  );
}
